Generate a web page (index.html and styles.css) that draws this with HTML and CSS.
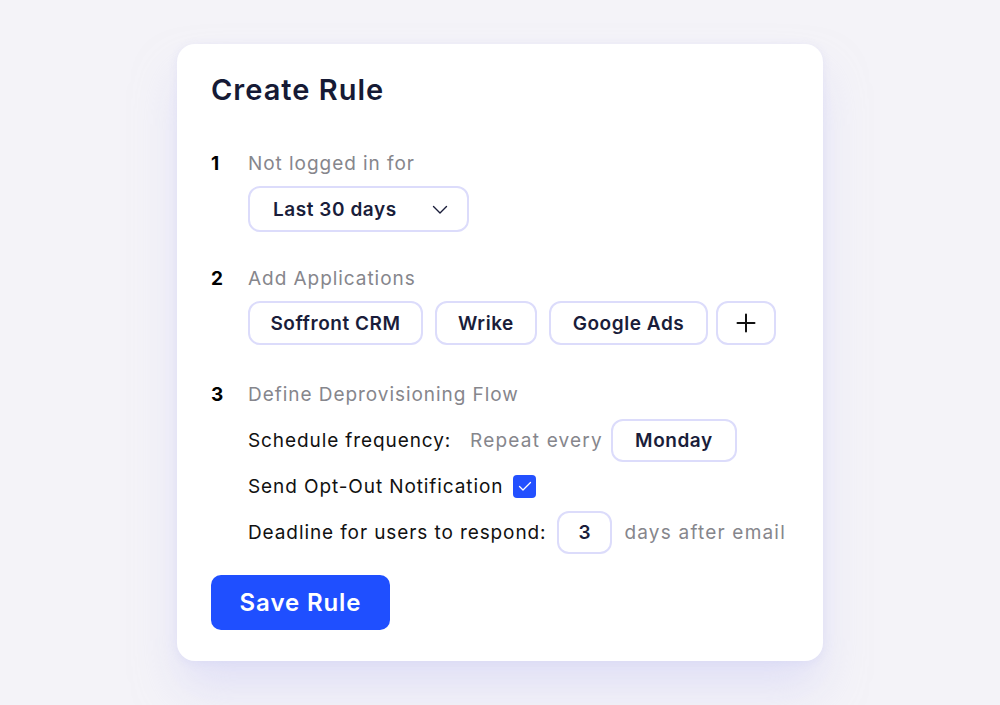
FILE: index.html
```html
<!DOCTYPE html>
<html>
<head>
<meta charset="utf-8">
<link rel="stylesheet" href="styles.css">
</head>
<body>
<div class="page">
  <div class="card">
    <h1 class="title">Create Rule</h1>
    <div class="steps">
      <div class="step s1">
        <div class="num">1</div>
        <div class="body">
          <div class="label">Not logged in for</div>
          <div class="select">
            <span>Last 30 days</span>
            <svg class="chev" width="16" height="10" viewBox="0 0 16 10"><path d="M1.5 1.5 L8 8 L14.5 1.5" fill="none" stroke="#1a1d3a" stroke-width="1.4" stroke-linecap="round" stroke-linejoin="round"/></svg>
          </div>
        </div>
      </div>
      <div class="step s2">
        <div class="num">2</div>
        <div class="body">
          <div class="label">Add Applications</div>
          <div class="chips">
            <div class="chip app-a">Soffront CRM</div>
            <div class="chip app-b">Wrike</div>
            <div class="chip app-c">Google Ads</div>
            <div class="chip plus"><svg width="20" height="20" viewBox="0 0 20 20"><path d="M10 1.5 V18.5 M1.5 10 H18.5" stroke="#111" stroke-width="2" stroke-linecap="round"/></svg></div>
          </div>
        </div>
      </div>
      <div class="step s3">
        <div class="num">3</div>
        <div class="body">
          <div class="label">Define Deprovisioning Flow</div>
          <div class="rows">
            <div class="row">
              <span class="text">Schedule frequency:</span>
              <span class="muted gap-l">Repeat every</span>
              <div class="chip day">Monday</div>
            </div>
            <div class="row">
              <span class="text">Send Opt-Out Notification</span>
              <span class="check"><svg width="14" height="11" viewBox="0 0 14 11"><path d="M1.5 5.5 L5 9 L12.5 1.5" fill="none" stroke="#fff" stroke-width="1.3" stroke-linecap="round" stroke-linejoin="round"/></svg></span>
            </div>
            <div class="row">
              <span class="text">Deadline for users to respond:</span>
              <div class="chip num-box">3</div>
              <span class="muted">days after email</span>
            </div>
          </div>
        </div>
      </div>
    </div>
    <button class="save">Save Rule</button>
  </div>
</div>
</body>
</html>
```
FILE: styles.css
```css
* { box-sizing: border-box; }
html, body { margin: 0; padding: 0; }
body {
  background: #f4f3f8;
  font-family: "Inter", "Open Sans", sans-serif;
  width: 1000px;
  height: 705px;
  overflow: hidden;
}
.page {
  display: flex;
  justify-content: center;
  padding-top: 44px;
}
.card {
  width: 646px;
  height: 617px;
  background: #ffffff;
  border-radius: 18px;
  padding: 28px 34px 0 34px;
  box-shadow: 0 30px 46px -4px rgba(205, 205, 245, 0.5), 0 2px 10px rgba(220, 220, 245, 0.6);
}
.title {
  margin: 0;
  font-size: 29px;
  font-weight: 600;
  color: #161a35;
  letter-spacing: 1px;
  line-height: 36px;
}
.steps {
  margin-top: 43px;
  display: flex;
  flex-direction: column;
}
.step { display: flex; }
.s2 { margin-top: 34px; }
.s3 { margin-top: 37px; }
.num {
  width: 37px;
  font-size: 19px;
  font-weight: 700;
  color: #000;
  line-height: 26px;
}
.body {
  display: flex;
  flex-direction: column;
}
.label {
  font-size: 19px;
  color: #86868c;
  line-height: 26px;
  letter-spacing: 0.95px;
}
.select {
  margin-top: 9px;
  width: 221px;
  height: 46px;
  border: 2px solid #dcdcfb;
  border-radius: 12px;
  display: flex;
  align-items: center;
  justify-content: space-between;
  padding: 0 19px 0 23px;
  font-size: 19px;
  font-weight: 600;
  letter-spacing: 0.55px;
  color: #1a1d3a;
}
.chev { margin-top: 2px; }
.chips {
  margin-top: 9px;
  display: flex;
  gap: 12px;
}
.chip {
  height: 44px;
  border: 2px solid #dcdcfb;
  border-radius: 12px;
  display: flex;
  align-items: center;
  justify-content: center;
  padding: 0;
  font-size: 19px;
  font-weight: 600;
  letter-spacing: 0.55px;
  color: #1a1d3a;
}
.app-a { width: 175px; }
.app-b { width: 102px; }
.app-c { width: 159px; }
.chip.plus { width: 60px; margin-left: -4px; }
.rows {
  margin-top: 11px;
  display: flex;
  flex-direction: column;
  gap: 4px;
}
.row {
  display: flex;
  align-items: center;
  height: 42px;
  font-size: 19px;
  letter-spacing: 0.9px;
}
.text { color: #111; }
.muted { color: #86868c; letter-spacing: 1.2px; }
.gap-l { margin-left: 19px; margin-right: 8px; }
.chip.day { width: 126px; height: 43px; }
.check {
  width: 23px;
  height: 23px;
  border-radius: 4px;
  background: #2350ff;
  display: flex;
  align-items: center;
  justify-content: center;
  margin-left: 10px;
}
.chip.num-box { width: 55px; height: 43px; margin: 0 12px 0 11px; }
.save {
  margin-top: 22px;
  width: 179px;
  height: 55px;
  border: none;
  border-radius: 10px;
  background: #1f4fff;
  color: #fff;
  font-family: inherit;
  font-size: 24px;
  font-weight: 600;
  letter-spacing: 0.9px;
}
```
